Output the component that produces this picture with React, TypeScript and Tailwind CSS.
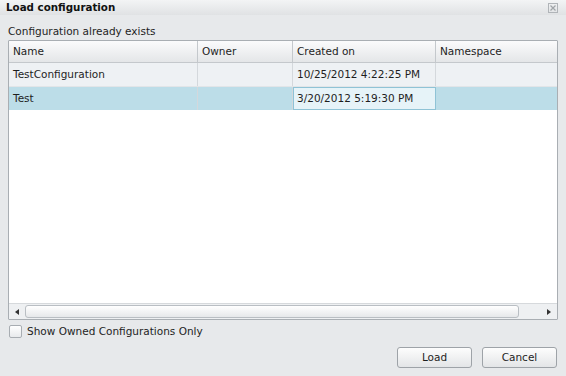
import React from "react";

const font = { fontFamily: '"DejaVu Sans", Verdana, sans-serif' };

export default function App() {
  return (
    <div className="w-[566px] h-[376px] bg-[#e7e9eb] flex flex-col text-[10.5px] text-[#1e1e1e]" style={font}>
      {/* Title bar */}
      <div className="h-[15px] flex items-center justify-between pl-[6px] pr-[8px] bg-gradient-to-b from-[#f3f4f5] to-[#e0e2e4]">
        <span className="font-bold text-[10.3px] leading-[15px] text-[#111]">Load configuration</span>
        <svg width="10" height="10" viewBox="0 0 10 10" className="mt-[1px]">
          <rect x="0.5" y="0.5" width="9" height="9" fill="none" stroke="#b0b4b8" />
          <path d="M2.5 2.5 L7.5 7.5 M7.5 2.5 L2.5 7.5" stroke="#a0a4a8" strokeWidth="1.2" />
        </svg>
      </div>
      <div className="flex flex-col px-[8px] pt-[10px]">
        <div className="leading-[13px] h-[15px]">Configuration already exists</div>
        {/* Grid */}
        <div className="h-[280px] w-[550px] border border-[#a9aeb3] bg-white flex flex-col rounded-[1px]">
          <div className="flex h-[22px] bg-gradient-to-b from-[#fbfbfc] to-[#e4e6e8] border-b border-[#c4c8cc]">
            <div className="w-[189px] pl-[4px] flex items-center border-r border-[#c4c8cc]">Name</div>
            <div className="w-[95px] pl-[4px] flex items-center border-r border-[#c4c8cc]">Owner</div>
            <div className="w-[143px] pl-[4px] flex items-center border-r border-[#c4c8cc]">Created on</div>
            <div className="flex-1 pl-[4px] flex items-center">Namespace</div>
            <div className="w-[9px]"></div>
          </div>
          <div className="flex h-[24px] bg-[#eef1f4] border-b border-[#e2e5e8]">
            <div className="w-[189px] pl-[4px] flex items-center border-r border-[#d4d8dc]">TestConfiguration</div>
            <div className="w-[95px] pl-[4px] flex items-center border-r border-[#d4d8dc]"></div>
            <div className="w-[143px] pl-[4px] flex items-center border-r border-[#d4d8dc]">10/25/2012 4:22:25 PM</div>
            <div className="w-[112px]"></div>
          </div>
          <div className="flex h-[23px] bg-[#bcdde8]">
            <div className="w-[189px] pl-[4px] flex items-center border-r border-[#d4d8dc]">Test</div>
            <div className="w-[95px] pl-[4px] flex items-center border-r border-[#d4d8dc]"></div>
            <div className="w-[143px] pl-[3px] flex items-center border border-[#8fc3d6] bg-[#e6f3f8]">3/20/2012 5:19:30 PM</div>
            <div className="w-[112px]"></div>
          </div>
          <div className="flex-1"></div>
          {/* Horizontal scrollbar */}
          <div className="h-[16px] flex items-center bg-[#eef0f2] border-t border-[#d6d9dc]">
            <div className="w-[16px] h-full flex items-center justify-center">
              <svg width="4" height="6" viewBox="0 0 4 6"><path d="M4 0 L0 3 L4 6 Z" fill="#333" /></svg>
            </div>
            <div className="w-[494px] h-[13px] rounded-[3px] border border-[#b9bec3] bg-gradient-to-b from-[#ffffff] to-[#e6e8ea]"></div>
            <div className="flex-1 h-full flex items-center justify-end pr-[6px]">
              <svg width="4" height="6" viewBox="0 0 4 6"><path d="M0 0 L4 3 L0 6 Z" fill="#333" /></svg>
            </div>
          </div>
        </div>
        {/* Checkbox */}
        <div className="flex items-center mt-[4px] h-[15px] pl-[1px]">
          <div className="w-[13px] h-[13px] border border-[#a8adb2] rounded-[2px] bg-gradient-to-b from-[#ffffff] to-[#e8eaec]"></div>
          <span className="ml-[5px]">Show Owned Configurations Only</span>
        </div>
        {/* Buttons */}
        <div className="flex justify-end gap-[10px] mt-[8px] pr-[1px]">
          <button className="w-[75px] h-[21px] border border-[#9ea3a8] rounded-[3px] bg-gradient-to-b from-[#fdfdfd] to-[#e3e5e7] text-[10.5px]" style={font}>Load</button>
          <button className="w-[75px] h-[21px] border border-[#9ea3a8] rounded-[3px] bg-gradient-to-b from-[#fdfdfd] to-[#e3e5e7] text-[10.5px]" style={font}>Cancel</button>
        </div>
      </div>
    </div>
  );
}
